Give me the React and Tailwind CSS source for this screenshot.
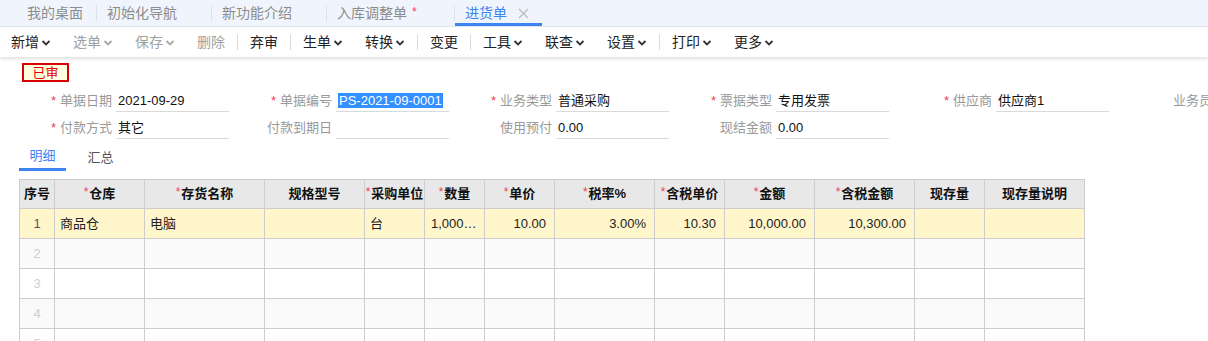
import React from "react";

const Chev = ({ c = "#333" }) => (
  <svg width="10" height="6" viewBox="0 0 10 6" className="ml-[2px] mt-[1px]">
    <path d="M1.5 1 L5 4.5 L8.5 1" fill="none" stroke={c} strokeWidth="1.8" />
  </svg>
);

const Sep = () => <div className="w-px h-[16px] mx-[1px] bg-[#dcdcdc]" />;

const Item = ({ t, chev, dis }) => (
  <div className={`flex items-center px-[11px] text-[14px] ${dis ? "text-[#a0a0a0]" : "text-[#222]"}`}>
    <span className="w-[28px] whitespace-nowrap">{t}</span>
    {chev && <Chev c={dis ? "#a8a8a8" : "#333"} />}
  </div>
);

const Field = ({ req, label, value, sel }) => (
  <div className="flex w-[220px] shrink-0 items-end">
    <div className="w-[103px] shrink-0 text-right pr-[4px] text-[13px] text-[#999] leading-[22px] whitespace-nowrap">
      {req && <span className="text-[#f0405a] mr-[4px]">*</span>}
      {label}
    </div>
    {label !== "业务员" && (
      <div className="w-[113px] h-[22px] border-b border-[#dadada] text-[13px] text-[#111] leading-[22px] pl-[2px] whitespace-nowrap overflow-hidden">
        {sel ? <span className="bg-[#3390ff] text-white px-[1px]">{value}</span> : value}
      </div>
    )}
  </div>
);

const cols = [
  ["序号", 35, false],
  ["仓库", 90, true],
  ["存货名称", 120, true],
  ["规格型号", 100, false],
  ["采购单位", 60, true],
  ["数量", 60, true],
  ["单价", 70, true],
  ["税率%", 100, true],
  ["含税单价", 70, true],
  ["金额", 90, true],
  ["含税金额", 100, true],
  ["现存量", 70, false],
  ["现存量说明", 100, false],
];

const row1 = [
  ["1", "c"],
  ["商品仓", "l"],
  ["电脑", "l"],
  ["", "l"],
  ["台", "l"],
  ["1,000.00", "e"],
  ["10.00", "r"],
  ["3.00%", "r"],
  ["10.30", "r"],
  ["10,000.00", "r"],
  ["10,300.00", "r"],
  ["", "l"],
  ["", "l"],
];

export default function App() {
  return (
    <div className="w-[1208px] h-[341px] overflow-hidden bg-white font-['Liberation_Sans','Noto_Sans_CJK_SC',sans-serif]">
      {/* tab bar */}
      <div className="h-[27px] bg-[#f0f5fd] border-b border-[#dfe5ee] flex items-stretch text-[14px] text-[#8c8c8c]">
        <div className="w-[96px] pl-[27px] flex items-center">我的桌面</div>
        <div className="w-px h-[16px] self-center bg-[#dde2ea]" />
        <div className="w-[114px] pl-[10px] flex items-center">初始化导航</div>
        <div className="w-px h-[16px] self-center bg-[#dde2ea]" />
        <div className="w-[114px] pl-[10px] flex items-center">新功能介绍</div>
        <div className="w-px h-[16px] self-center bg-[#dde2ea]" />
        <div className="w-[127px] pl-[10px] flex items-center">
          入库调整单<span className="text-[#f0405a] ml-[5px] text-[12px] -mt-[3px]">*</span>
        </div>
        <div className="w-px h-[16px] self-center bg-[#dde2ea]" />
        <div className="relative w-[87px] pl-[10px] flex items-center text-[#3d84f2]">
          进货单
          <svg width="11" height="11" viewBox="0 0 11 11" className="ml-[11px]">
            <path d="M1 1 L10 10 M10 1 L1 10" stroke="#bdbdbd" strokeWidth="1.4" />
          </svg>
          <div className="absolute left-0 right-0 bottom-0 h-[3px] bg-[#3d84f2]" />
        </div>
      </div>

      {/* toolbar */}
      <div className="h-[30px] flex items-center shadow-[0_2px_3px_rgba(0,0,0,0.12)] relative">
        <Item t="新增" chev />
        <Item t="选单" chev dis />
        <Item t="保存" chev dis />
        <Item t="删除" dis />
        <Sep />
        <Item t="弃审" />
        <Sep />
        <Item t="生单" chev />
        <Item t="转换" chev />
        <Sep />
        <Item t="变更" />
        <Sep />
        <Item t="工具" chev />
        <Item t="联查" chev />
        <Item t="设置" chev />
        <Sep />
        <Item t="打印" chev />
        <Item t="更多" chev />
      </div>

      {/* form */}
      <div className="pt-[6px]">
        <div className="ml-[22px] w-[47px] h-[19px] border-2 border-[#d80000] bg-[#ffffe0] text-[#e00000] text-[13px] leading-[15px] text-center">
          已审
        </div>
        <div className="mt-[8px] ml-[13px] flex">
          <Field req label="单据日期" value="2021-09-29" />
          <Field req label="单据编号" value="PS-2021-09-0001" sel />
          <Field req label="业务类型" value="普通采购" />
          <Field req label="票据类型" value="专用发票" />
          <Field req label="供应商" value="供应商1" />
          <Field label="业务员" value="" />
        </div>
        <div className="mt-[5px] ml-[13px] flex">
          <Field req label="付款方式" value="其它" />
          <Field label="付款到期日" value="" />
          <Field label="使用预付" value="0.00" />
          <Field label="现结金额" value="0.00" />
        </div>
      </div>

      {/* sub tabs */}
      <div className="mt-[5px] ml-[19px] flex gap-[11px] text-[13px]">
        <div className="w-[47px] h-[27px] flex items-center justify-center text-[#3d84f2] border-b-[3px] border-[#3d84f2]">明细</div>
        <div className="w-[47px] h-[27px] flex items-center justify-center text-[#555]">汇总</div>
      </div>

      {/* table */}
      <div className="mt-[8px] ml-[19px]">
        <table className="table-fixed border-collapse text-[13px]" style={{ width: 1065 }}>
          <colgroup>
            {cols.map(([n, w]) => (
              <col key={n} style={{ width: w }} />
            ))}
          </colgroup>
          <thead>
            <tr className="h-[29px] bg-[#e8e8e8]">
              {cols.map(([n, w, r]) => (
                <th key={n} className="border border-[#cdcdcd] font-bold text-[#111] text-center whitespace-nowrap p-0">
                  {r && <span className="text-[#f0405a] font-normal text-[12px] mr-[1px] relative -top-[2px]">*</span>}
                  {n}
                </th>
              ))}
            </tr>
          </thead>
          <tbody>
            <tr className="h-[30px] bg-[#fff6cc]">
              {row1.map(([v, a], i) => (
                <td
                  key={i}
                  className={`border border-[#cdcdcd] text-[#222] whitespace-nowrap overflow-hidden ${
                    a === "c"
                      ? "text-center text-[#555]"
                      : a === "r"
                      ? "text-right pr-[8px]"
                      : a === "e"
                      ? "text-left pl-[6px] pr-[4px] text-ellipsis"
                      : "text-left pl-[5px]"
                  }`}
                >
                  {v}
                </td>
              ))}
            </tr>
            {[2, 3, 4, 5].map((n) => (
              <tr key={n} className={`h-[30px] ${n % 2 === 0 ? "bg-[#fafafa]" : "bg-white"}`}>
                {cols.map(([c], i) => (
                  <td key={c} className={`border border-[#cdcdcd] ${i === 0 ? "text-center text-[#cfcfcf]" : ""}`}>
                    {i === 0 ? n : ""}
                  </td>
                ))}
              </tr>
            ))}
          </tbody>
        </table>
      </div>
    </div>
  );
}
